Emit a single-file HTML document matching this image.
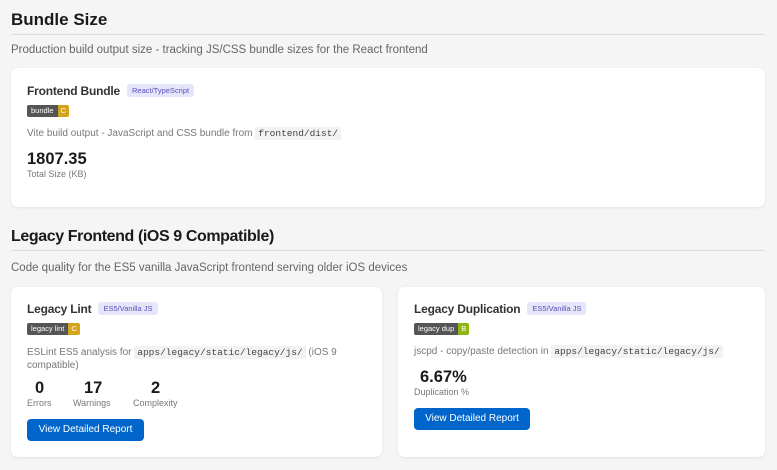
<!DOCTYPE html>
<html><head><style>
*{margin:0;padding:0;box-sizing:border-box}
body{width:777px;height:470px;background:#f5f5f5;font-family:"Liberation Sans",sans-serif;color:#222;position:relative;overflow:hidden}
.a{position:absolute;white-space:nowrap}
h2{font-size:17px;font-weight:bold;color:#1a1a1a}
.hr{position:absolute;left:11px;width:754px;height:1px;background:#ddd}
.sub{font-size:11.5px;color:#666}
.card{position:absolute;background:#fff;border-radius:7px;box-shadow:0 1px 3px rgba(0,0,0,.08)}
.t{font-size:12px;font-weight:bold;color:#333;letter-spacing:-0.2px}
.tag{display:inline-block;font-size:7.5px;color:#5a4fc0;background:#e6e6fb;padding:2px 5px;border-radius:3px;margin-left:7px;vertical-align:2px;font-weight:normal;letter-spacing:0}
.bd{display:inline-flex;font-size:7.5px;color:#fff;height:12px;line-height:12px;border-radius:2px;overflow:hidden}
.bd span:first-child{background:#555;padding:0 4px}
.bd span:last-child{padding:0 3px}
.d{font-size:10px;color:#777}
code{font-family:"Liberation Mono",monospace;background:#f2f2f2;color:#444;padding:1px 3px;border-radius:2px;font-size:9.5px}
.n{font-size:16.5px;font-weight:bold;color:#1a1a1a}
.l{font-size:9px;color:#777}
.btn{position:absolute;background:#0066cc;color:#fff;font-size:10px;border-radius:4px;text-align:center;line-height:22px;height:22px}
</style></head><body>
<h2 class="a" style="left:11px;top:10px">Bundle Size</h2>
<div class="hr" style="top:34px"></div>
<div class="a sub" style="left:11px;top:44px">Production build output size - tracking JS/CSS bundle sizes for the React frontend</div>
<div class="card" style="left:11px;top:68px;width:754px;height:139px">
<div class="a t" style="left:16px;top:16px">Frontend Bundle<span class="tag">React/TypeScript</span></div>
<div class="a bd" style="left:16px;top:37px"><span>bundle</span><span style="background:#d4a51c">C</span></div>
<div class="a d" style="left:16px;top:60px">Vite build output - JavaScript and CSS bundle from <code>frontend/dist/</code></div>
<div class="a n" style="left:16px;top:82px">1807.35</div>
<div class="a l" style="left:16px;top:101px">Total Size (KB)</div>
</div>
<h2 class="a" style="left:11px;top:228px;font-size:16px;letter-spacing:-0.4px">Legacy Frontend (iOS 9 Compatible)</h2>
<div class="hr" style="top:250px"></div>
<div class="a sub" style="left:11px;top:262px">Code quality for the ES5 vanilla JavaScript frontend serving older iOS devices</div>
<div class="card" style="left:11px;top:287px;width:371px;height:170px">
<div class="a t" style="left:16px;top:15px">Legacy Lint<span class="tag">ES5/Vanilla JS</span></div>
<div class="a bd" style="left:16px;top:36px"><span>legacy lint</span><span style="background:#d4a51c">C</span></div>
<div class="a d" style="left:16px;top:59px;white-space:normal;width:320px;line-height:13px">ESLint ES5 analysis for <code>apps/legacy/static/legacy/js/</code> (iOS 9 compatible)</div>
<div class="a n" style="left:24px;top:92px">0</div><div class="a l" style="left:16px;top:111px">Errors</div>
<div class="a n" style="left:73px;top:92px">17</div><div class="a l" style="left:62px;top:111px">Warnings</div>
<div class="a n" style="left:140px;top:92px">2</div><div class="a l" style="left:122px;top:111px">Complexity</div>
<div class="btn" style="left:16px;top:132px;width:117px">View Detailed Report</div>
</div>
<div class="card" style="left:398px;top:287px;width:367px;height:170px">
<div class="a t" style="left:16px;top:15px">Legacy Duplication<span class="tag">ES5/Vanilla JS</span></div>
<div class="a bd" style="left:16px;top:36px"><span>legacy dup</span><span style="background:#8fb514">B</span></div>
<div class="a d" style="left:16px;top:59px">jscpd - copy/paste detection in <code>apps/legacy/static/legacy/js/</code></div>
<div class="a n" style="left:22px;top:81px">6.67%</div>
<div class="a l" style="left:16px;top:100px">Duplication %</div>
<div class="btn" style="left:16px;top:121px;width:116px">View Detailed Report</div>
</div>
</body></html>
